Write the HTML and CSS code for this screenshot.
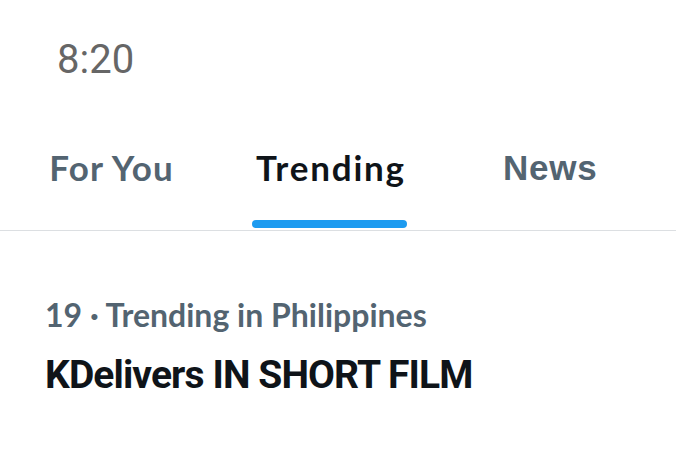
FILE: index.html
```html
<!DOCTYPE html>
<html>
<head>
<meta charset="utf-8">
<link rel="stylesheet" href="styles.css">
</head>
<body>
<div class="status">8:20</div>
<nav class="tabs">
  <div class="tab"><span class="label">For You</span></div>
  <div class="tab active"><span class="label">Trending</span></div>
  <div class="tab"><span class="label news">News</span></div>
</nav>
<section class="trend">
  <div class="meta">19 · Trending in Philippines</div>
  <div class="title">KDelivers IN SHORT FILM</div>
</section>
</body>
</html>
```
FILE: styles.css
```css
html, body {
  margin: 0;
  padding: 0;
  background: #ffffff;
  width: 676px;
  height: 459px;
  overflow: hidden;
}
.status {
  font-family: Roboto, "Liberation Sans", sans-serif;
  font-size: 40px;
  color: #666666;
  padding: 34px 0 0 57px;
  height: 52px;
  line-height: 52px;
}
.tabs {
  display: grid;
  grid-template-columns: 1fr 1fr 1fr;
  padding: 0 16px 0 2px;
  margin-top: 34px;
  border-bottom: 1px solid #dcdfe2;
  height: 110px;
}
.tab {
  display: flex;
  justify-content: center;
  font-family: Lato, "Liberation Sans", sans-serif;
  font-weight: 700;
  font-size: 35px;
  letter-spacing: 1.2px;
  color: #536471;
}
.label {
  position: relative;
  height: 110px;
  line-height: 94px;
}
.tab.active {
  color: #0f1419;
  letter-spacing: 1.8px;
}
.tab.active .label::after {
  content: "";
  position: absolute;
  left: -4px;
  right: -1px;
  bottom: 2px;
  height: 8px;
  border-radius: 4px;
  background: #1d9bf0;
}
.news {
  font-family: "Liberation Sans", Arial, sans-serif;
  font-size: 35px;
  letter-spacing: 0.8px;
  line-height: 96px;
}
.trend {
  padding: 64px 0 0 45px;
}
.meta {
  font-family: Lato, "Liberation Sans", sans-serif;
  font-weight: 700;
  font-size: 32px;
  color: #536471;
  line-height: 40px;
}
.title {
  font-family: Roboto, "Liberation Sans", sans-serif;
  font-weight: 700;
  font-size: 39px;
  letter-spacing: -0.9px;
  color: #0f1419;
  line-height: 60px;
  margin-top: 10px;
}
```
